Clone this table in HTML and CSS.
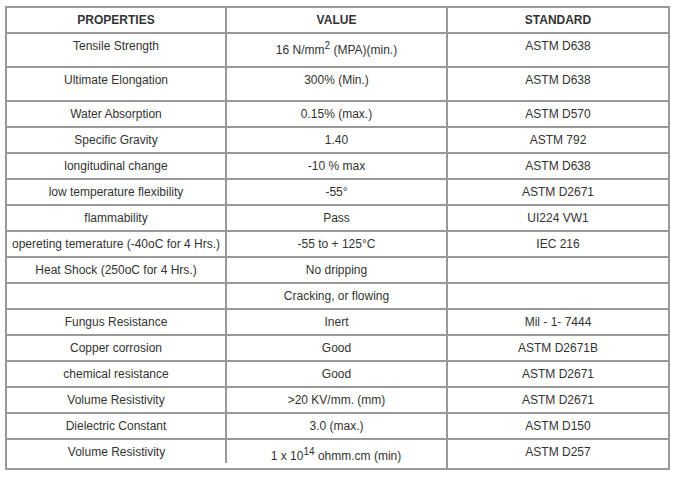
FILE: index.html
```html
<!DOCTYPE html>
<html>
<head>
<meta charset="utf-8">
<link rel="stylesheet" href="styles.css">
</head>
<body>
<div class="page">
<table class="props">
<colgroup><col class="c1"><col class="c2"><col class="c3"></colgroup>
<thead>
<tr class="r-head"><th>PROPERTIES</th><th>VALUE</th><th>STANDARD</th></tr>
</thead>
<tbody>
<tr class="r-tall"><td>Tensile Strength</td><td>16 N/mm<sup>2</sup> (MPA)(min.)</td><td>ASTM D638</td></tr>
<tr class="r-tall"><td>Ultimate Elongation</td><td>300% (Min.)</td><td>ASTM D638</td></tr>
<tr><td>Water Absorption</td><td>0.15% (max.)</td><td>ASTM D570</td></tr>
<tr><td>Specific Gravity</td><td>1.40</td><td>ASTM 792</td></tr>
<tr><td>longitudinal change</td><td>-10 % max</td><td>ASTM D638</td></tr>
<tr><td>low temperature flexibility</td><td>-55°</td><td>ASTM D2671</td></tr>
<tr><td>flammability</td><td>Pass</td><td>UI224 VW1</td></tr>
<tr><td>opereting temerature (-40oC for 4 Hrs.)</td><td>-55 to + 125°C</td><td>IEC 216</td></tr>
<tr><td>Heat Shock (250oC for 4 Hrs.)</td><td>No dripping</td><td></td></tr>
<tr><td></td><td>Cracking, or flowing</td><td></td></tr>
<tr><td>Fungus Resistance</td><td>Inert</td><td>Mil - 1- 7444</td></tr>
<tr><td>Copper corrosion</td><td>Good</td><td>ASTM D2671B</td></tr>
<tr><td>chemical resistance</td><td>Good</td><td>ASTM D2671</td></tr>
<tr><td>Volume Resistivity</td><td>&gt;20 KV/mm. (mm)</td><td>ASTM D2671</td></tr>
<tr><td>Dielectric Constant</td><td>3.0 (max.)</td><td>ASTM D150</td></tr>
<tr class="r-last"><td class="l1"><div class="split-l">Volume Resistivity</div></td><td class="l2"><div class="split-r">1 x 10<sup>14</sup> ohmm.cm (min)</div></td><td>ASTM D257</td></tr>
</tbody>
</table>
</div>
</body>
</html>
```
FILE: styles.css
```css
html, body {
  margin: 0;
  padding: 0;
  background: #ffffff;
}
.page {
  padding: 6px 5px;
}
.props {
  table-layout: fixed;
  width: 665px;
  border-collapse: separate;
  border-spacing: 0;
  border: 1px solid #999999;
  font-family: "Liberation Sans", Arial, sans-serif;
  font-size: 12px;
  color: #333333;
}
.c1 { width: 220px; }
.c2 { width: 221px; }
.c3 { width: 222px; }
.props th,
.props td {
  box-sizing: border-box;
  border: 1px solid #999999;
  padding: 1px 4px 0;
  height: 26px;
  line-height: 22px;
  text-align: center;
  vertical-align: top;
  white-space: nowrap;
  overflow: visible;
}
.props th {
  font-weight: bold;
}
.props sup {
  font-size: 10px;
}
.r-tall td {
  height: 34px;
}
.r-last td {
  height: 30px;
}
.r-last td.l1 {
  border-right: 0;
  padding: 0;
}
.r-last td.l2 {
  border-left: 0;
  padding: 0;
}
.split-l {
  height: 22px;
  padding: 1px 4px 0 5px;
  border-right: 1px solid #999999;
}
.split-r {
  height: 22px;
  padding: 1px 5px 0 4px;
  border-left: 1px solid #999999;
}
```
